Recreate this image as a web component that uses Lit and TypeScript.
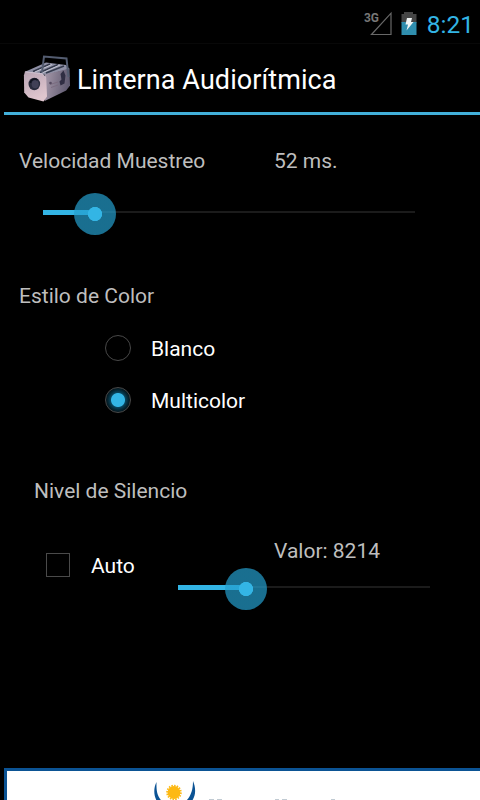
// Settings screen of the flashlight app: status bar, title, options and ad banner.

import { LitElement, html, css, svg } from 'lit';
import { customElement, property, state } from 'lit/decorators.js';
import { classMap } from 'lit/directives/class-map.js';

@customElement('holo-slider')
export class HoloSlider extends LitElement {
  static override styles = css`
    :host {
      display: block;
      position: relative;
      height: 42px;
    }
    .track,
    .fill,
    .thumb {
      position: absolute;
    }
    .track {
      left: 0;
      right: 0;
      top: 18px;
      height: 2px;
      background: #1b1b1b;
    }
    .fill {
      left: 0;
      top: 17px;
      height: 5px;
      background: #33b5e5;
    }
    .thumb {
      top: 0;
      width: 42px;
      height: 42px;
      margin-left: -21px;
      border-radius: 50%;
      background: radial-gradient(circle, #33b5e5 6.8px, rgba(36, 158, 205, 0.7) 7.4px);
    }
  `;

  @property({ type: Number }) value = 0;

  override render() {
    return html`
      <div class="track"></div>
      <div class="fill" style="width: ${this.value}%"></div>
      <div class="thumb" style="left: ${this.value}%"></div>
    `;
  }
}

@customElement('app-root')
export class AppRoot extends LitElement {
  static override styles = css`
    :host {
      display: flex;
      flex-direction: column;
      width: 480px;
      height: 800px;
      overflow: hidden;
      background: #000;
      color: #bebebe;
      font:
        21px/28px Roboto,
        sans-serif;
    }
    svg {
      display: block;
      flex: none;
    }
    .status {
      display: flex;
      box-sizing: border-box;
      height: 44px;
      padding: 10px 6px 0 0;
      justify-content: flex-end;
      border-bottom: 1px solid #080808;
    }
    .battery {
      margin: 0 10px 0 8px;
    }
    .clock {
      color: #33b5e5;
      font-size: 24.5px;
      line-height: 30px;
    }
    .network {
      fill: #777;
      font: bold 12px Roboto, sans-serif;
    }
    .header {
      display: flex;
      box-sizing: border-box;
      height: 71px;
      margin-left: 4px;
      padding: 8px 0 0 16px;
      border-bottom: 3px solid #42b0da;
      color: #fff;
    }
    .title {
      margin: 11px 0 0 3px;
      font-size: 27px;
      font-weight: 400;
      letter-spacing: 0.08px;
      line-height: 34px;
      white-space: nowrap;
    }
    .content {
      flex: 1;
      padding: 32px 0 0 19px;
    }
    .row {
      display: grid;
      grid-template-columns: 255px 1fr;
    }
    .speed {
      width: 372px;
      margin: 18px 0 0 24px;
    }
    .style-label {
      margin-top: 47px;
    }
    .radios {
      display: flex;
      flex-direction: column;
      gap: 24px;
      margin: 25px 0 0 86px;
    }
    .radio {
      display: flex;
      align-items: center;
      gap: 20px;
      height: 28px;
      color: #fff;
    }
    .dot {
      box-sizing: border-box;
      width: 26px;
      height: 26px;
      margin-top: -3px;
      border: 1px solid #484848;
      border-radius: 50%;
    }
    .dot.on {
      background: radial-gradient(circle, #33b5e5 6.5px, #08435b 7.5px, #052734 10px, #04161e 12px);
    }
    .silence-label {
      margin: 62px 0 0 15px;
    }
    .silence {
      display: grid;
      grid-template-columns: 132px 252px;
      margin: 32px 0 0 27px;
    }
    .check {
      display: flex;
      gap: 21px;
      margin-top: 15px;
      color: #fff;
    }
    .box {
      box-sizing: border-box;
      width: 24px;
      height: 24px;
      margin-top: 1px;
      border: 1px solid #4a4a4a;
    }
    .value {
      margin-left: 96px;
    }
    .level {
      margin-top: 3px;
    }
    .banner {
      box-sizing: border-box;
      height: 32px;
      margin-left: 4px;
      border: solid #0b5394;
      border-width: 3px 0 0 3px;
      background: #fff;
      overflow: hidden;
    }
  `;

  @state() private color = 'Multicolor';

  private renderSignal() {
    return svg`
      <svg width="29" height="28" viewBox="0 0 29 28">
        <text class="network" x="0" y="11.500" textLength="15" lengthAdjust="spacingAndGlyphs">3G</text>
        <path d="M27 3.200V24.500H7.500Z" fill="none" stroke="#686868" stroke-width="1.200" />
      </svg>`;
  }

  private renderBattery() {
    return svg`
      <svg class="battery" width="16" height="28" viewBox="0 0 16 28">
        <path d="M3 2h9v2h3.500v9H.5V4H3z" fill="#454545" />
        <path d="M.5 12h15v13H.5z" fill="#2f8eae" />
        <path d="M6 8h5l-1 4h2.500L5.500 20.500l1.500-6H4.500z" fill="#f1f5f5" />
      </svg>`;
  }

  private renderProjector() {
    return svg`
      <svg width="54" height="54" viewBox="0 0 54 54">
        <defs>
          <linearGradient id="front" x2="0.4" y2="1">
            <stop stop-color="#b9a5b5" />
            <stop offset="1" stop-color="#e0c6ce" />
          </linearGradient>
          <linearGradient id="side" x2="1" y2="0.2">
            <stop stop-color="#a89aab" />
            <stop offset="1" stop-color="#5f5a70" />
          </linearGradient>
        </defs>
        <path d="M4.500 20 26 10.500 46 13 49.500 17 26 23z" fill="#8f90a5" />
        <path d="m13 19.500 17-7.500M20 20.500l18-8M26 21l18-7" stroke="#343a4c" stroke-width="1.600" />
        <path d="m15 20 17-7.500M22 21l18-8" stroke="#c2c4d1" />
        <path d="m25 22.500 24.500-6 .5 17-3.800 5-21.500 10.500z" fill="url(#side)" />
        <path d="m5 19.500 17 2 4.200 4 .8 19-3.500 5-15-4-4.300-5-.3-17z" fill="url(#front)" />
        <path d="m5.500 19.800 16.500 2 4 3.700" fill="none" stroke="#cdc1cf" />
        <path d="m40.500 22 3-3.500 2 5-1 8-4 2-1-4 2-2z" fill="#302e43" />
        <path d="M22 20.500 24 4.500 46.500 6.500 48.500 25" fill="none" stroke="#535c70" stroke-width="2" />
        <path d="m30 32.500 8-2.500m-7 5.500 7-2.500" stroke="#7b6c80" />
        <circle cx="30.500" cy="31" r="1.300" fill="#554a60" />
        <ellipse cx="14.300" cy="32" rx="5.800" ry="6.200" fill="#292b3c" />
        <ellipse cx="15.200" cy="32.300" rx="3.500" ry="4" fill="#414056" />
        <path d="M10.500 31c0-4 5-5 7-3" fill="none" stroke="#11131f" stroke-width="1.500" />
      </svg>`;
  }

  private renderBanner() {
    return svg`
      <svg width="473" height="29" viewBox="7 771 473 29">
        <path d="M156.500 782c-3 6-3 13 .3 19h5c-5-5-5.500-11-5.300-19z" fill="#0b5394" />
        <path d="M193 781c3 7 3 14-1 20h-6c5-5 7-11 7-20z" fill="#0b5394" />
        <circle cx="174" cy="792.500" r="6.400" fill="#fdb913" />
        <circle cx="174" cy="792.500" r="6.900" fill="none" stroke="#fdb913" stroke-width="1.800" stroke-dasharray="1.500 1.200" />
        <path d="M209 799.700h5m3 0h5M275 799.700h4m3 0h5M331 799.700h4" stroke="#9eafba" stroke-width=".8" />
      </svg>`;
  }

  private renderRadio(name: string) {
    return html`
      <div class="radio" @click=${() => (this.color = name)}>
        <span class=${classMap({ dot: true, on: this.color === name })}></span>
        <span>${name}</span>
      </div>
    `;
  }

  override render() {
    return html`
      <div class="status">
        ${this.renderSignal()} ${this.renderBattery()}
        <span class="clock">8:21</span>
      </div>
      <div class="header">
        ${this.renderProjector()}
        <div class="title">Linterna Audiorítmica</div>
      </div>
      <div class="content">
        <div class="row"><span>Velocidad Muestreo</span><span>52 ms.</span></div>
        <holo-slider class="speed" .value=${14}></holo-slider>
        <div class="style-label">Estilo de Color</div>
        <div class="radios">${['Blanco', 'Multicolor'].map((name) => this.renderRadio(name))}</div>
        <div class="silence-label">Nivel de Silencio</div>
        <div class="silence">
          <div class="check"><span class="box"></span><span>Auto</span></div>
          <div>
            <div class="value">Valor: 8214</div>
            <holo-slider class="level" .value=${27}></holo-slider>
          </div>
        </div>
      </div>
      <div class="banner">${this.renderBanner()}</div>
    `;
  }
}
